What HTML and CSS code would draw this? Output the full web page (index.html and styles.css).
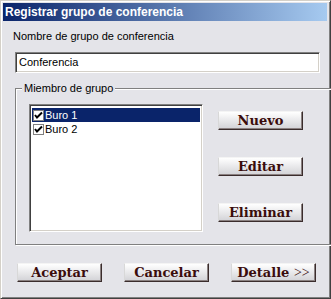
FILE: index.html
```html
<!DOCTYPE html>
<html lang="es">
<head>
    <meta charset="UTF-8">
    <title>Registrar grupo de conferencia</title>
    <link rel="stylesheet" href="styles.css">
</head>
<body>
    <div class="window">
        <div class="title-bar">Registrar grupo de conferencia</div>
        <div class="content">
            <div class="field-label">Nombre de grupo de conferencia</div>
            <div class="text-input">Conferencia</div>

            <div class="group">
                <span class="group-label">Miembro de grupo</span>
                <div class="group-body">
                    <div class="listbox">
                        <div class="list-row selected">
                            <svg class="check" width="11" height="11" viewBox="0 0 11 11">
                                <rect x="0.5" y="0.5" width="10" height="10" fill="#fff" stroke="#808080"/>
                                <path d="M2 5 L4 7.5 L9 2.5" fill="none" stroke="#000" stroke-width="2"/>
                            </svg>
                            <span>Buro 1</span>
                        </div>
                        <div class="list-row">
                            <svg class="check" width="11" height="11" viewBox="0 0 11 11">
                                <rect x="0.5" y="0.5" width="10" height="10" fill="#fff" stroke="#808080"/>
                                <path d="M2 5 L4 7.5 L9 2.5" fill="none" stroke="#000" stroke-width="2"/>
                            </svg>
                            <span>Buro 2</span>
                        </div>
                    </div>
                    <div class="side-buttons">
                        <button class="btn">Nuevo</button>
                        <button class="btn">Editar</button>
                        <button class="btn">Eliminar</button>
                    </div>
                </div>
            </div>

            <div class="bottom-buttons">
                <button class="btn">Aceptar</button>
                <button class="btn">Cancelar</button>
                <button class="btn">Detalle <span class="arrows">&gt;&gt;</span></button>
            </div>
        </div>
    </div>
</body>
</html>
```

FILE: styles.css
```css
body {
    margin: 0;
    background-color: #e4e4e9;
    font-family: "Liberation Sans", Arial, sans-serif;
    font-size: 11px;
}
.window {
    width: 331px;
    height: 299px;
    box-sizing: border-box;
    border: 1px solid;
    border-color: #d4d0c8 #404040 #404040 #d4d0c8;
    box-shadow: inset 1px 1px 0 #fff, inset -1px -1px 0 #808080;
    padding: 2px 3px 2px 2px;
    background-color: #e4e4e9;
}
.title-bar {
    height: 18px;
    line-height: 18px;
    padding-left: 2px;
    color: #fff;
    font-size: 12px;
    font-weight: bold;
    background: linear-gradient(to right, #0a246a, #a6caf0);
}
.content {
    padding-left: 12px;
}
.field-label {
    margin: 9px 0 0 -2px;
    line-height: 13px;
    color: #000;
}
.text-input {
    margin-top: 9px;
    width: 305px;
    height: 21px;
    box-sizing: border-box;
    border: 1px solid;
    border-color: #808080 #fff #fff #808080;
    box-shadow: inset 1px 1px 0 #404040, inset -1px -1px 0 #d4d0c8;
    background-color: #fff;
    padding: 3px 3px 0 3px;
    line-height: 13px;
}
.group {
    position: relative;
    margin-top: 15px;
    width: 304px;
    border: 1px solid #808080;
    box-shadow: inset 1px 1px 0 #fff, 1px 1px 0 #fff;
    padding: 15px 0 12px 13px;
}
.group-label {
    position: absolute;
    top: -7px;
    left: 6px;
    padding: 0 2px;
    line-height: 13px;
    background-color: #e4e4e9;
}
.group-body {
    display: flex;
}
.listbox {
    width: 174px;
    height: 128px;
    box-sizing: border-box;
    border: 1px solid;
    border-color: #808080 #fff #fff #808080;
    box-shadow: inset 1px 1px 0 #404040, inset -1px -1px 0 #d4d0c8;
    background-color: #fff;
    padding: 3px 2px 2px 2px;
}
.list-row {
    display: flex;
    align-items: center;
    gap: 1px;
    height: 14px;
    padding-left: 1px;
    line-height: 13px;
}
.list-row.selected {
    background-color: #0a246a;
    color: #fff;
}
.check {
    display: block;
    flex-shrink: 0;
}
.side-buttons {
    display: flex;
    flex-direction: column;
    gap: 27px;
    padding-top: 7px;
    margin-left: 15px;
}
.btn {
    width: 85px;
    height: 19px;
    padding: 0;
    box-sizing: border-box;
    border: 1px solid;
    border-color: #f4f4f4 #3a2c2c #3a2c2c #d8d8d8;
    box-shadow: inset -1px -1px 0 #8a8080;
    background: linear-gradient(#ffffff, #d2d2d6);
    font-family: "DejaVu Serif", Georgia, serif;
    font-weight: bold;
    font-size: 13px;
    line-height: 16px;
    color: #3a0c0c;
}
.arrows {
    font-family: "Liberation Serif", serif;
    font-weight: normal;
    font-size: 14px;
}
.bottom-buttons {
    display: flex;
    gap: 22px;
    margin: 18px 0 0 2px;
}
```
